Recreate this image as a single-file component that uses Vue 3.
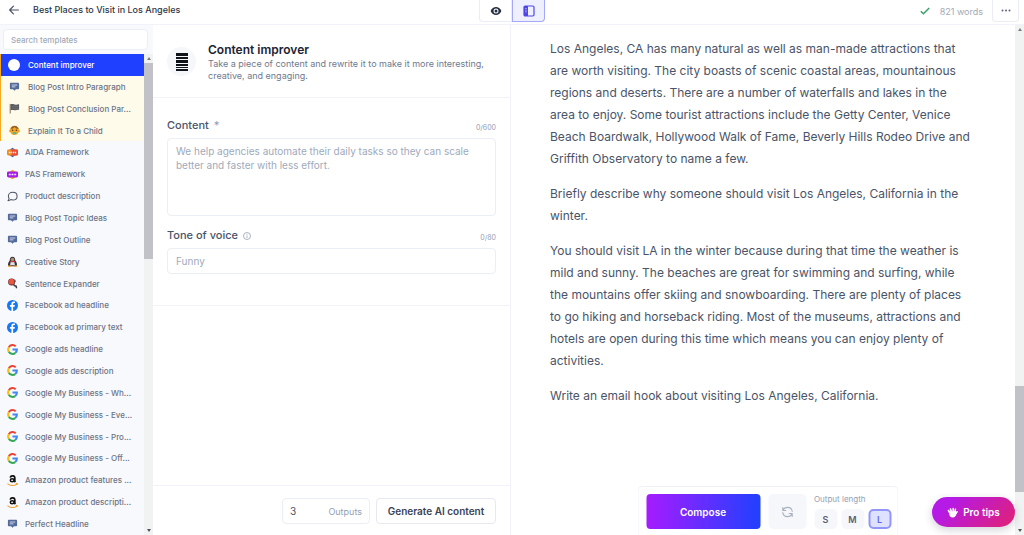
<script setup>
import { ref } from 'vue'

const pinned = [
  { icon: 'dot', label: 'Content improver', active: true },
  { icon: 'chat', label: 'Blog Post Intro Paragraph' },
  { icon: 'flag', label: 'Blog Post Conclusion Par...' },
  { icon: 'child', label: 'Explain It To a Child' },
]

const templates = [
  { icon: 'aida', label: 'AIDA Framework' },
  { icon: 'pas', label: 'PAS Framework' },
  { icon: 'bubble', label: 'Product description' },
  { icon: 'chat', label: 'Blog Post Topic Ideas' },
  { icon: 'chat', label: 'Blog Post Outline' },
  { icon: 'penguin', label: 'Creative Story' },
  { icon: 'balloon', label: 'Sentence Expander' },
  { icon: 'facebook', label: 'Facebook ad headline' },
  { icon: 'facebook', label: 'Facebook ad primary text' },
  { icon: 'google', label: 'Google ads headline' },
  { icon: 'google', label: 'Google ads description' },
  { icon: 'google', label: 'Google My Business - Wh...' },
  { icon: 'google', label: 'Google My Business - Eve...' },
  { icon: 'google', label: 'Google My Business - Pro...' },
  { icon: 'google', label: 'Google My Business - Off...' },
  { icon: 'amazon', label: 'Amazon product features ...' },
  { icon: 'amazon', label: 'Amazon product descripti...' },
  { icon: 'chat', label: 'Perfect Headline' },
]

const groups = [
  { name: 'pinned', items: pinned },
  { name: 'rest', items: templates },
]

const paragraphs = [
  'Los Angeles, CA has many natural as well as man-made attractions that are worth visiting. The city boasts of scenic coastal areas, mountainous regions and deserts. There are a number of waterfalls and lakes in the area to enjoy. Some tourist attractions include the Getty Center, Venice Beach Boardwalk, Hollywood Walk of Fame, Beverly Hills Rodeo Drive and Griffith Observatory to name a few.',
  'Briefly describe why someone should visit Los Angeles, California in the winter.',
  'You should visit LA in the winter because during that time the weather is mild and sunny. The beaches are great for swimming and surfing, while the mountains offer skiing and snowboarding. There are plenty of places to go hiking and horseback riding. Most of the museums, attractions and hotels are open during this time which means you can enjoy plenty of activities.',
  'Write an email hook about visiting Los Angeles, California.',
]

const lengths = ['S', 'M', 'L']
const selected = ref('L')
const search = ref('')
const content = ref('')
const tone = ref('')
const outputs = ref('3')
</script>

<template>
  <div class="app">
    <header class="topbar">
      <div class="doc">
        <button class="bare" aria-label="Back">
          <svg width="10" height="10" viewBox="0 0 10 10" fill="none" stroke="#4a5164" stroke-width="1.2" stroke-linecap="round" stroke-linejoin="round"><path d="M9.4 5H.8M4.4 1.2L.7 5l3.7 3.8" /></svg>
        </button>
        <h1>Best Places to Visit in Los Angeles</h1>
      </div>
      <div class="views">
        <button class="view" aria-label="Preview">
          <svg width="12" height="10" viewBox="0 0 12 10"><path d="M.6 5C1.8 2.5 3.700 1 6 1s4.200 1.500 5.400 4C10.200 7.500 8.300 9 6 9S1.800 7.500.6 5z" fill="#262f42" /><circle cx="6" cy="5" r="2.500" fill="#fff" /><circle cx="6" cy="5" r="1.500" fill="#262f42" /></svg>
        </button>
        <button class="view on" aria-label="Split view">
          <svg width="12" height="12" viewBox="0 0 12 12"><rect x="1" y="1" width="10" height="10" rx="1.200" fill="#eef0ff" stroke="#4f46e5" stroke-width="1.200" /><path d="M1 1h4v10H1z" fill="#4f46e5" /><path d="M2.200 3.500h1.600M2.200 5.200h1.600M2.200 6.900h1.600" stroke="#c7c9fb" stroke-width=".7" /></svg>
        </button>
      </div>
      <div class="status">
        <svg width="10" height="8" viewBox="0 0 10 8" fill="none" stroke="#38a169" stroke-width="1.500"><path d="M.8 4.200L3.400 6.700 9.200 1" /></svg>
        <span>821 words</span>
        <button class="more" aria-label="More options">
          <svg width="10" height="3" viewBox="0 0 10 3" fill="#5b6478"><circle cx="1.500" cy="1.500" r="1" /><circle cx="5" cy="1.500" r="1" /><circle cx="8.500" cy="1.500" r="1" /></svg>
        </button>
      </div>
    </header>

    <div class="columns">
      <aside class="sidebar">
        <div class="search">
          <input v-model="search" type="text" placeholder="Search templates" aria-label="Search templates" />
        </div>
        <div class="scroller">
          <nav class="list">
            <ul v-for="g in groups" :key="g.name" :class="g.name">
              <li v-for="t in g.items" :key="t.label">
                <button class="item" :class="{ active: t.active }">
                  <svg class="ico" viewBox="0 0 12 12">
                    <circle v-if="t.icon === 'dot'" cx="6" cy="6" r="6" fill="#fff" />
                    <g v-else-if="t.icon === 'chat'"><path d="M2.200 2h7.600c.7 0 1.200.5 1.200 1.200v4.600c0 .7-.5 1.200-1.200 1.200H7.600L6 10.600 4.400 9H2.200C1.500 9 1 8.500 1 7.800V3.200C1 2.500 1.500 2 2.200 2z" fill="#536a9b" /><path d="M3 4.400h6M3 6.400h4" stroke="#e8ecf7" stroke-width=".9" /></g>
                    <g v-else-if="t.icon === 'flag'"><path d="M1.300 1v10.500" stroke="#776255" stroke-width="1" /><path d="M1.800 1.500c2.500-1 4 .8 6 .4 1.200-.2 2-.5 3.200-.4v6c-2-.3-3 .8-5 .4-1.500-.3-2.500-.6-4.200 0z" fill="#58595e" /><path d="M3 3.500c2 0 4 .8 7 .2M3 5.700c2 0 4 .8 7 .2" stroke="#85868a" stroke-width=".6" fill="none" /></g>
                    <g v-else-if="t.icon === 'child'"><circle cx="6" cy="6" r="5" fill="#f5a524" /><path d="M1.500 4.500C2.400 2 4 .8 6 .8s3.800 1.300 4.600 3.700C8.800 4.600 7 3.500 6 2.300 4.900 3.500 3.400 4.600 1.500 4.500z" fill="#8c6230" /><circle cx="4" cy="5.700" r=".8" fill="#493520" /><circle cx="8" cy="5.700" r=".8" fill="#493520" /><rect x="3.800" y="7.500" width="4.400" height="2.500" rx="1.200" fill="#5fb58a" /><circle cx=".9" cy="6.500" r=".9" fill="#d98218" /><circle cx="11.100" cy="6.500" r=".9" fill="#d98218" /></g>
                    <g v-else-if="t.icon === 'aida'"><path d="M6 .8l3.600 2.400H2.400z" fill="#4464b8" /><path d="M6 11.200L2.400 8.800h7.200z" fill="#4464b8" /><rect x="0" y="2.800" width="12" height="6.400" rx="1.500" fill="#f28a1c" /><path d="M5 2.800h5.500c.9 0 1.500.6 1.500 1.500v3.400c0 .9-.6 1.500-1.500 1.500H5z" fill="#eb4d35" /><path d="M2 6h1.800M4.700 6h1M6.500 6h1.400M8.600 6H10" stroke="#fff" stroke-width="1.500" /></g>
                    <g v-else-if="t.icon === 'pas'"><path d="M6 .8l3.600 2.400H2.400z" fill="#f2a51c" /><path d="M6 11.200L2.400 8.800h7.200z" fill="#f2a51c" /><rect x="0" y="2.800" width="12" height="6.400" rx="1.500" fill="#a51be8" /><path d="M2 6h2M5 6h2M8 6h2" stroke="#fff" stroke-width="1.500" /></g>
                    <path v-else-if="t.icon === 'bubble'" d="M6.300 1.400c2.700 0 4.700 1.800 4.700 4.200s-2 4.200-4.700 4.200c-.8 0-1.500-.2-2.200-.5-.8.7-1.800 1.100-3 1.200.8-.8 1.200-1.500 1.200-2.500C1.800 7.300 1.500 6.500 1.500 5.600c0-2.400 2.100-4.200 4.800-4.200z" fill="none" stroke="#4b5262" stroke-width="1.100" stroke-linejoin="round" />
                    <g v-else-if="t.icon === 'penguin'"><path d="M3 5C2.900 2 4 .7 6 .7S9.100 2 9 5c1.500 2 2.200 3.500 1.800 5.500L9 11.300H3l-1.800-.8C.8 8.500 1.500 7 3 5z" fill="#343439" /><path d="M4 6.500h4l.6 3.600H3.400z" fill="#dfe3e9" /><circle cx="6" cy="3.700" r="1.900" fill="#b98b69" /><path d="M3.600 5.600h5v1.200H3.600z" fill="#dc4238" /><path d="M1 11h3.500M7.500 11H11" stroke="#ec9b2d" stroke-width="1.200" /></g>
                    <g v-else-if="t.icon === 'balloon'"><path d="M7 7l1.500 1.500 1.300.2.700 2.500" stroke="#34343c" stroke-width="1.500" fill="none" /><circle cx="5" cy="4.400" r="3.800" fill="#4b3339" /><circle cx="4.900" cy="4" r="3.200" fill="#f05438" /><path d="M8.500 1.800l.8 2.400" stroke="#292d3a" stroke-width=".8" /></g>
                    <g v-else-if="t.icon === 'facebook'"><circle cx="6" cy="6" r="6" fill="#1877f2" /><path d="M6.700 12V7.300h1.600l.3-1.900H6.700V4.300c0-.6.3-1 1-1h1V1.700c-.3-.1-.9-.2-1.500-.2-1.500 0-2.400.9-2.400 2.500v1.400H3.200v1.900h1.600V12z" fill="#fff" /></g>
                    <g v-else-if="t.icon === 'google'" fill="none" stroke-width="2.200"><path d="M2 3.500A4.800 4.800 0 0 1 9.500 2.600" stroke="#ea4335" /><path d="M2 3.500a4.800 4.800 0 0 0 0 5" stroke="#fbbc05" /><path d="M2 8.500a4.800 4.800 0 0 0 7 1.400" stroke="#34a853" /><path d="M6 6.100h4.800c0 1.600-.7 2.900-1.800 3.800" stroke="#4285f4" /></g>
                    <g v-else><path d="M3.500 2.900C3.800 1.500 4.900.9 6.100.9c1.500 0 2.400.8 2.400 2.200v3.300c0 .6.200.9.600 1.400" fill="none" stroke="#111" stroke-width="1.900" /><ellipse cx="5.600" cy="5.700" rx="2" ry="1.700" fill="none" stroke="#111" stroke-width="1.600" /><path d="M.5 9.300c3.300 2.600 7.500 2.600 10.500.4M9.600 9.200l1.700.1-.4 1.500" fill="none" stroke="#f5a02a" stroke-width="1.100" /></g>
                  </svg>
                  <span>{{ t.label }}</span>
                </button>
              </li>
            </ul>
          </nav>
          <div class="bar side-bar" aria-hidden="true">
            <i class="up"></i><b class="before"></b><b class="thumb"></b><b class="after"></b><i class="down"></i>
          </div>
        </div>
      </aside>

      <section class="editor">
        <div class="intro">
          <div class="badge">
            <svg width="12" height="18" viewBox="0 0 12 18" fill="#11131a"><path d="M0 0h12v3H0zM0 4h12v2H0zM0 7h12v3H0zM0 11h12v2H0zM0 14h12v1H0zM0 16h12v2H0z" /></svg>
          </div>
          <div>
            <h2>Content improver</h2>
            <p>Take a piece of content and rewrite it to make it more interesting, creative, and engaging.</p>
          </div>
        </div>
        <form class="fields" @submit.prevent>
          <div class="caption">
            <label for="content">Content <em>*</em></label><span>0/600</span>
          </div>
          <textarea id="content" v-model="content" placeholder="We help agencies automate their daily tasks so they can scale better and faster with less effort."></textarea>
          <div class="caption second">
            <label for="tone">Tone of voice
              <svg width="8" height="8" viewBox="0 0 8 8" fill="none" stroke="#94a0b4" stroke-width=".8"><circle cx="4" cy="4" r="3.500" /><path d="M4 3.600v2.300M4 2v.8" /></svg>
            </label><span>0/80</span>
          </div>
          <input id="tone" v-model="tone" type="text" placeholder="Funny" />
        </form>
        <footer class="actions">
          <label class="outputs"><input v-model="outputs" type="text" /><span>Outputs</span></label>
          <button class="generate">Generate AI content</button>
        </footer>
      </section>

      <main class="document">
        <article>
          <p v-for="p in paragraphs" :key="p">{{ p }}</p>
        </article>
        <div class="bar main-bar" aria-hidden="true">
          <i class="up"></i><b class="before"></b><b class="thumb"></b><b class="after"></b><i class="down"></i>
        </div>
        <div class="composer">
          <button class="compose">Compose</button>
          <button class="refresh" aria-label="Regenerate">
            <svg width="12" height="12" viewBox="0 0 12 12" fill="none" stroke="#a9b2c1" stroke-width="1.100" stroke-linecap="round" stroke-linejoin="round"><path d="M1.300 1.500v3h3M1.500 4.300C2.300 2.500 4 1.400 6 1.400c2.500 0 4.400 1.700 4.700 4M10.700 10.500v-3h-3M10.500 7.700c-.8 1.800-2.500 2.900-4.500 2.900-2.500 0-4.400-1.700-4.700-4" /></svg>
          </button>
          <div class="length">
            <span>Output length</span>
            <div>
              <button v-for="l in lengths" :key="l" :class="{ chosen: selected === l }" @click="selected = l">{{ l }}</button>
            </div>
          </div>
        </div>
        <button class="tips">
          <svg width="11" height="12" viewBox="0 0 11 12" fill="none" stroke="#fff" stroke-linecap="round"><path d="M2.600 6.500L1.500 4.500M4.300 5.500L3.500 3M6.200 5.500V2.500M8 5.700l.4-2.300M8.800 7.500l1.300-1.700" stroke-width="1.600" /><path d="M2 5.500l6.800-.5.700 2.200c-.2 2.600-1.600 4.300-3.800 4.300-2.100 0-3.400-1.700-3.600-3.800z" fill="#fff" stroke="none" /></svg>
          Pro tips
        </button>
      </main>
    </div>
  </div>
</template>

<style>
body { margin: 0; }
</style>

<style scoped>
* { box-sizing: border-box; }
.app {
  height: 100vh;
  display: flex;
  flex-direction: column;
  overflow: hidden;
  background: #fff;
  color: #4a5468;
  font-family: Inter, "Liberation Sans", sans-serif;
}
button, input, textarea { font: inherit; color: inherit; }
button { border: 0; padding: 0; background: none; display: flex; align-items: center; justify-content: center; cursor: pointer; }
svg { display: block; flex: none; }
h1, h2, p, ul { margin: 0; padding: 0; }
li { list-style: none; }
::placeholder { color: #a0aaba; opacity: 1; }

.topbar { flex: none; height: 25px; display: grid; grid-template-columns: 1fr auto 1fr; border-bottom: 1px solid #f2f3fa; }
.doc { display: flex; align-items: center; gap: 14px; padding: 0 0 4px 9px; }
h1 { font-size: 9px; font-weight: 500; line-height: 12px; color: #2d3548; }
.views { display: flex; height: 22px; }
.view { width: 33px; border: 1px solid #ebedf5; border-top: 0; border-radius: 0 0 0 4px; }
.view.on { border-color: #a5a8fa; background: #eef0ff; border-radius: 0 0 4px 0; }
.status { display: flex; justify-content: flex-end; align-items: center; height: 22px; padding-right: 5px; font-size: 9px; color: #a0aaba; }
.status span { margin: 0 9px 0 10px; }
.more { width: 27px; height: 22px; border: 1px solid #ebedf5; border-top: 0; border-radius: 0 0 4px 4px; }

.columns { flex: 1; min-height: 0; display: grid; grid-template-columns: minmax(0, 153fr) minmax(0, 358fr) minmax(0, 513fr); }
.sidebar { display: flex; flex-direction: column; min-height: 0; background: #f8f9fd; }
.search { padding: 4px 5px 4px 3px; }
.search input { display: block; width: 100%; height: 21px; padding: 0 7px; border: 1px solid #eceef5; border-radius: 4px; background: #fff; font-size: 8px; font-weight: 500; outline: 0; }
.scroller { flex: 1; min-height: 0; display: flex; }
.list { flex: 1; min-width: 0; display: flex; flex-direction: column; }
.list ul { display: flex; flex-direction: column; padding-left: 7px; }
.pinned { flex: 4; border-left: 1px solid #f6a821; background: #fffbea; }
.list .pinned { padding-left: 0; }
.rest { flex: 18; }
.list li { flex: 1; min-height: 0; }
.item { width: 100%; height: 100%; justify-content: flex-start; gap: 8px; font-size: 8px; font-weight: 500; line-height: 12px; color: #6b7486; text-align: left; }
.pinned .item { padding-left: 8px; }
.ico { width: 11px; height: 11px; margin-right: -1px; }
.pinned .ico { margin-right: 0; }
.item span { white-space: nowrap; }
.item.active { background: #2040ff; color: #fff; }
.item.active .ico { width: 12px; height: 12px; margin-left: -1px; }

.bar { flex: none; width: 9px; display: flex; flex-direction: column; align-items: center; background: #f1f2f2; }
.bar i { width: 0; height: 0; margin: 3px 0; border: 2px solid transparent; }
.bar .up { border-top: 0; border-bottom: 3px solid #7b7d82; }
.bar .down { border-bottom: 0; border-top: 3px solid #50525a; }
.bar b { width: 100%; }
.thumb { background: #c1c2c7; }
.side-bar .thumb { flex: 196; }
.side-bar .after { flex: 267; }

.editor { display: flex; flex-direction: column; border-right: 1px solid #f2f3fa; }
.intro { display: flex; gap: 12px; padding: 17px 14px 15px; border-bottom: 1px solid #f2f3fa; }
.badge { flex: none; width: 29px; height: 29px; margin-top: 5px; border-radius: 50%; background: #f6f7fb; display: flex; align-items: center; justify-content: center; }
h2 { font-size: 12px; font-weight: 600; line-height: 16px; color: #1c2334; }
.intro p { font-size: 9px; line-height: 12px; color: #6f7a8e; }
.fields { padding: 20px 14px 31px; border-bottom: 1px solid #f2f3fa; }
.caption { display: flex; align-items: flex-end; justify-content: space-between; height: 15px; margin-bottom: 5px; }
.second { margin-top: 12px; }
.caption label { display: flex; align-items: center; gap: 5px; font-size: 11px; font-weight: 500; line-height: 15px; color: #4a5468; }
.caption em { font-style: normal; color: #94a0b4; }
.caption span { font-size: 7px; line-height: 10px; color: #94a0b4; }
.fields textarea, .fields > input { display: block; width: 100%; border: 1px solid #eceef5; border-radius: 4px; background: #fff; padding: 5px 8px; font-size: 10px; line-height: 14px; outline: 0; resize: none; }
.fields textarea { height: 78px; }
.fields > input { height: 26px; }
.actions { margin-top: auto; display: flex; justify-content: flex-end; gap: 6px; padding: 12px 14px 11px; border-top: 1px solid #f2f3fa; }
.outputs { width: 88px; height: 26px; display: flex; align-items: center; justify-content: space-between; padding: 0 7px; border: 1px solid #eceef5; border-radius: 4px; }
.outputs input { width: 30px; border: 0; padding: 0; background: none; font-size: 10px; outline: 0; }
.outputs span { font-size: 9px; color: #94a0b4; }
.generate { width: 120px; height: 26px; border: 1px solid #e6e9f1; border-radius: 4px; font-size: 10px; font-weight: 600; color: #3a4356; }

.document { position: relative; display: flex; justify-content: space-between; min-width: 0; min-height: 0; }
article { padding: 13px 45px 0 39px; flex: 1; min-width: 0; overflow: hidden; }
article p { font-size: 12px; line-height: 22px; margin-bottom: 13px; color: #4a5468; }
.main-bar .before { flex: 352; }
.main-bar .thumb { flex: 106; }
.main-bar .after { flex: 34; }

.composer { position: absolute; bottom: 0; left: 50%; transform: translateX(-50%); width: 261px; display: flex; gap: 8px; padding: 7px 6px 6px 8px; border: 1px solid #f0f1f8; border-bottom: 0; border-radius: 5px 5px 0 0; background: #fff; }
.compose { flex: 1; height: 35px; border-radius: 4px; background: linear-gradient(90deg, #a61cff, #2040ff); color: #fff; font-size: 10px; font-weight: 600; }
.refresh { width: 38px; height: 35px; border-radius: 5px; background: #f6f7fb; }
.length > span { display: block; font-size: 8px; line-height: 10px; color: #94a0b4; }
.length > div { display: flex; gap: 4px; margin-top: 5px; }
.length button { width: 23px; height: 20px; border-radius: 5px; background: #f6f7fa; font-size: 9px; font-weight: 600; color: #566074; }
.length .chosen { border: 2px solid #9196f8; background: #dfe2ff; color: #6366f1; }
.tips { position: absolute; right: 9px; bottom: 8px; width: 83px; height: 30px; gap: 5px; border-radius: 15px; background: linear-gradient(135deg, #b51ae6 20%, #dc2080 90%); color: #fff; font-size: 10px; font-weight: 600; box-shadow: 0 3px 8px rgb(30 30 60 / 20%); }
</style>
